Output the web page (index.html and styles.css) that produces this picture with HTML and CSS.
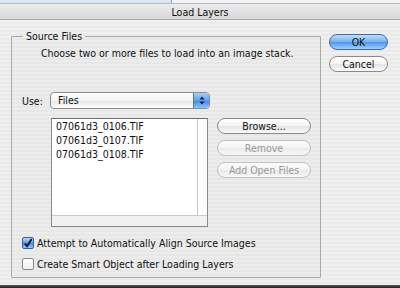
FILE: index.html
```html
<!DOCTYPE html>
<html>
<head>
<meta charset="utf-8">
<link rel="stylesheet" href="styles.css">
</head>
<body>
<div class="screen">
  <div class="topstrip"><div class="topstrip-left"></div><div class="topstrip-right"></div></div>
  <div class="titlebar">Load Layers</div>
  <div class="dialog">
    <fieldset class="group">
      <legend class="legend">Source Files</legend>
      <div class="intro">Choose two or more files to load into an image stack.</div>
      <div class="use-row">
        <span class="use-label">Use:</span>
        <div class="popup">
          <span class="popup-text">Files</span>
          <span class="popup-arrows">
            <svg width="6" height="9" viewBox="0 0 6 9"><path d="M3 0.5 L5.5 3.5 L0.5 3.5 Z M3 8.5 L5.5 5.5 L0.5 5.5 Z" fill="#10204a"/></svg>
          </span>
        </div>
      </div>
      <div class="files-row">
        <div class="listbox">
          <div class="list-main">
            <div class="list-items">
              <div class="item">07061d3_0106.TIF</div>
              <div class="item">07061d3_0107.TIF</div>
              <div class="item">07061d3_0108.TIF</div>
            </div>
            <div class="vscroll"></div>
          </div>
          <div class="hscroll"></div>
        </div>
        <div class="side-buttons">
          <div class="btn">Browse...</div>
          <div class="btn disabled">Remove</div>
          <div class="btn disabled">Add Open Files</div>
        </div>
      </div>
      <div class="checks">
        <div class="check-row"><span class="cb checked"><svg width="11" height="11" viewBox="0 0 11 11"><path d="M2 5.5 L4.5 8.5 L9.5 0.5" fill="none" stroke="#0a1230" stroke-width="2"/></svg></span><span>Attempt to Automatically Align Source Images</span></div>
        <div class="check-row"><span class="cb"></span><span>Create Smart Object after Loading Layers</span></div>
      </div>
    </fieldset>
    <div class="main-buttons">
      <div class="btn default">OK</div>
      <div class="btn">Cancel</div>
    </div>
  </div>
  <div class="bottomedge"></div>
</div>
</body>
</html>
```
FILE: styles.css
```css
* { box-sizing: border-box; }
html, body { margin: 0; padding: 0; }
body {
  width: 400px;
  height: 288px;
  overflow: hidden;
  font-family: "DejaVu Sans Condensed", "DejaVu Sans", sans-serif;
  font-size: 10.5px;
  color: #111;
}
.screen {
  width: 400px;
  height: 288px;
  display: flex;
  flex-direction: column;
  background: repeating-linear-gradient(#efefef 0 2px, #eaeaea 2px 4px);
}
.topstrip {
  height: 3px;
  display: flex;
}
.topstrip-left {
  width: 172px;
  background: #dbe5f1;
  border-right: 1px solid #8ea4c4;
}
.topstrip-right {
  flex: 1;
  background: #f1f4f8;
}
.titlebar {
  height: 17px;
  line-height: 16px;
  text-align: center;
  color: #111;
  background: linear-gradient(#ededed, #d8d8d8);
  border-top: 1px solid #b8b8b8;
  border-bottom: 1px solid #a8a8a8;
}
.dialog {
  flex: 1;
  display: flex;
  align-items: flex-start;
  padding: 10px 11px 0 11px;
}
.group {
  margin: 0;
  width: 310px;
  height: 248px;
  border: 1px solid #a9a9a9;
  border-radius: 1px;
  padding: 0 0 0 10px;
  background: rgba(0,0,0,0.012);
  display: flex;
  flex-direction: column;
}
.legend {
  padding: 0 3px;
  margin-left: 1px;
  line-height: 12px;
}
.intro {
  margin-top: 5px;
  padding-left: 19px;
  line-height: 12px;
}
.use-row {
  margin-top: 33px;
  display: flex;
  align-items: center;
  height: 17px;
}
.use-label {
  width: 28px;
}
.popup {
  width: 160px;
  height: 17px;
  display: flex;
  border: 1px solid #8c8c8c;
  border-radius: 4px;
  background: linear-gradient(#ffffff, #f3f3f3 50%, #e6e6e6 51%, #fdfdfd);
  overflow: hidden;
}
.popup-text {
  flex: 1;
  padding-left: 7px;
  line-height: 15px;
}
.popup-arrows {
  width: 16px;
  display: flex;
  align-items: center;
  justify-content: center;
  background: linear-gradient(#a9cdf7, #5ea0ee 50%, #3f88e6 51%, #8cc4fb);
  border-left: 1px solid #4c78b0;
}
.files-row {
  margin-top: 9px;
  display: flex;
  align-items: flex-start;
}
.listbox {
  margin-left: 29px;
  width: 157px;
  height: 109px;
  border: 1px solid #8a8a8a;
  border-top-color: #6e6e6e;
  background: #fff;
  display: flex;
  flex-direction: column;
}
.list-main {
  flex: 1;
  display: flex;
}
.list-items {
  flex: 1;
  padding: 0 0 0 4px;
}
.item {
  height: 14px;
  line-height: 14px;
}
.vscroll {
  width: 10px;
  border-left: 1px solid #c8c8c8;
  background: #fdfdfd;
}
.hscroll {
  height: 11px;
  border-top: 1px solid #c8c8c8;
  background: #f1f1f1;
}
.side-buttons {
  margin-left: 9px;
  display: flex;
  flex-direction: column;
  gap: 6px;
  width: 94px;
}
.btn {
  height: 16px;
  border: 1px solid #8a8a8a;
  border-radius: 8px;
  background: linear-gradient(#ffffff, #f4f4f4 50%, #e4e4e4 51%, #fafafa);
  text-align: center;
  line-height: 14px;
  color: #111;
}
.btn.disabled {
  color: #9a9a9a;
  border-color: #c2c2c2;
  background: linear-gradient(#fbfbfb, #f3f3f3 50%, #ebebeb 51%, #f7f7f7);
}
.checks {
  margin-top: 10px;
  display: flex;
  flex-direction: column;
  gap: 9px;
}
.check-row {
  display: flex;
  align-items: center;
  height: 12px;
}
.cb {
  width: 12px;
  height: 12px;
  margin-right: 3px;
  border: 1px solid #8a8a8a;
  border-radius: 2px;
  background: linear-gradient(#ffffff, #eeeeee);
  display: flex;
  align-items: center;
  justify-content: center;
}
.cb.checked {
  border-color: #3a5f9a;
  background: linear-gradient(#b8d6fa, #5c9ced 50%, #3f86e4 51%, #9ccaf9);
}
.main-buttons {
  margin-left: 8px;
  margin-top: 4px;
  display: flex;
  flex-direction: column;
  gap: 6px;
  width: 59px;
}
.btn.default {
  border-color: #3d6aa8;
  background: linear-gradient(#c2defc, #72b0f2 50%, #4c96ea 51%, #9fd0fb);
}
.bottomedge {
  height: 3px;
  background: linear-gradient(#555, #222);
}
```
